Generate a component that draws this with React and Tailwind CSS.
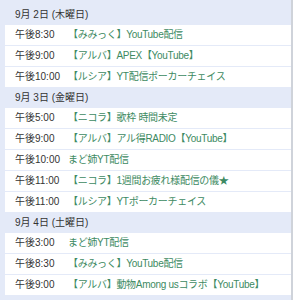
const schedule = [
  {
    date: "9月 2日 (木曜日)",
    items: [
      { time: "午後8:30", title: "【みみっく】YouTube配信" },
      { time: "午後9:00", title: "【アルバ】APEX【YouTube】" },
      { time: "午後10:00", title: "【ルシア】YT配信ポーカーチェイス" },
    ],
  },
  {
    date: "9月 3日 (金曜日)",
    items: [
      { time: "午後5:00", title: "【ニコラ】歌枠 時間未定" },
      { time: "午後9:00", title: "【アルバ】アル得RADIO【YouTube】" },
      { time: "午後10:00", title: "まど姉YT配信" },
      { time: "午後11:00", title: "【ニコラ】1週間お疲れ様配信の儀★" },
      { time: "午後11:00", title: "【ルシア】YTポーカーチェイス" },
    ],
  },
  {
    date: "9月 4日 (土曜日)",
    items: [
      { time: "午後3:00", title: "まど姉YT配信" },
      { time: "午後8:30", title: "【みみっく】YouTube配信" },
      { time: "午後9:00", title: "【アルバ】動物Among usコラボ【YouTube】" },
    ],
  },
];

export default function App() {
  return (
    <div
      className="w-[293px] h-[300px] overflow-hidden bg-[#e4eaf8] flex text-[10px] leading-none"
      style={{ fontFamily: '"Liberation Sans", "Noto Sans CJK JP", sans-serif' }}
    >
      <div className="w-[5px] shrink-0" />
      <div className="flex-1 min-w-0 flex flex-col">
        <div className="h-[4px] shrink-0" />
        {schedule.map((day) => (
          <div key={day.date} className="flex flex-col">
            <div className="h-[21px] flex items-center text-[#333]">
              <span className="w-[10px] shrink-0" />
              {day.date}
            </div>
            <div className="bg-white flex flex-col gap-px">
              {day.items.map((item, j) => (
                <div
                  key={j}
                  className="h-[20px] flex items-center bg-white outline outline-1 outline-[#e4eaf8]"
                >
                  <span className="w-[10px] shrink-0" />
                  <span className="w-[53px] shrink-0 text-[#333] whitespace-nowrap">
                    {item.time}
                  </span>
                  <span className="text-[#3d8a62] whitespace-nowrap tracking-[-0.3px]">
                    {item.title}
                  </span>
                </div>
              ))}
            </div>
          </div>
        ))}
      </div>
      <div className="w-[2px] shrink-0 bg-[#cfd3da]" />
    </div>
  );
}
